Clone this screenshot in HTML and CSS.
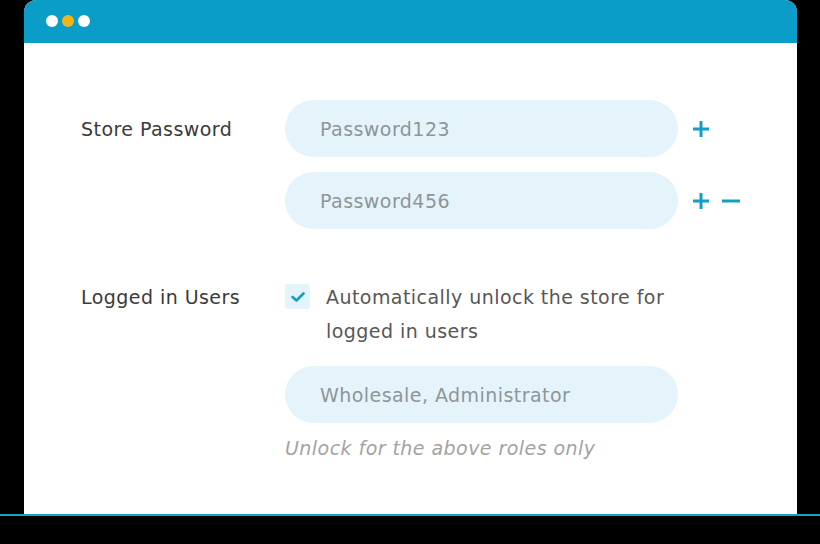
FILE: index.html
```html
<!DOCTYPE html>
<html lang="en">
<head>
  <meta charset="UTF-8" />
  <meta name="viewport" content="width=device-width, initial-scale=1.0"/>
  <title>Store Lock Settings</title>
  <link rel="stylesheet" href="styles.css">
</head>
<body>
  <div class="window">
    <div class="titlebar">
      <span class="dot"></span>
      <span class="dot dot-yellow"></span>
      <span class="dot"></span>
    </div>

    <div class="settings">
      <div class="label">Store Password</div>
      <div class="field-group">
        <div class="field-row">
          <input class="field" type="text" value="Password123" readonly />
          <div class="actions">
            <button class="icon-btn" title="Add">
              <svg width="18" height="18" viewBox="0 0 18 18"><path d="M9 1v16M1 9h16" /></svg>
            </button>
          </div>
        </div>
        <div class="field-row">
          <input class="field" type="text" value="Password456" readonly />
          <div class="actions">
            <button class="icon-btn" title="Add">
              <svg width="18" height="18" viewBox="0 0 18 18"><path d="M9 1v16M1 9h16" /></svg>
            </button>
            <button class="icon-btn" title="Remove">
              <svg width="18" height="18" viewBox="0 0 18 18"><path d="M0 9h18" /></svg>
            </button>
          </div>
        </div>
      </div>

      <div class="label label-users">Logged in Users</div>
      <div class="field-group users">
        <label class="check">
          <span class="check-box">
            <svg width="14" height="10" viewBox="0 0 14 10"><path d="M1.5 5l4 3.5L12.5 1.5" /></svg>
          </span>
          <span class="check-text">Automatically unlock the store for logged in users</span>
        </label>
        <input class="field" type="text" value="Wholesale, Administrator" readonly />
        <div class="hint">Unlock for the above roles only</div>
      </div>
    </div>
  </div>
  <div class="base"></div>
</body>
</html>
```

FILE: styles.css
```css
body {
  margin: 0;
  padding: 0;
  background-color: #000;
  font-family: 'DejaVu Sans', 'Noto Sans', Arial, sans-serif;
  color: #3d3d3d;
  letter-spacing: 0.45px;
}

.window {
  margin: 0 23px 0 24px;
  height: 514px;
  background-color: #fff;
  border-radius: 12px 12px 0 0;
  overflow: hidden;
}

.titlebar {
  height: 43px;
  background-color: #0a9dc7;
  display: flex;
  align-items: center;
  gap: 4px;
  padding: 0 0 2px 22px;
  box-sizing: border-box;
}

.dot {
  width: 12px;
  height: 12px;
  border-radius: 50%;
  background-color: #fff;
}

.dot-yellow {
  background-color: #f2b418;
}

.settings {
  display: grid;
  grid-template-columns: 204px 1fr;
  padding: 57px 0 0 57px;
}

.label {
  font-size: 19px;
  height: 57px;
  line-height: 59px;
  color: #3a3a3a;
}

.label-users {
  margin-top: 51px;
  height: 34px;
  line-height: 34px;
}

.field-group {
  display: flex;
  flex-direction: column;
  gap: 15px;
}

.field-row {
  display: flex;
  align-items: center;
}

.field {
  width: 393px;
  height: 57px;
  box-sizing: border-box;
  border: none;
  border-radius: 29px;
  background-color: #e5f4fa;
  padding: 0 0 0 35px;
  font-family: inherit;
  font-size: 19px;
  letter-spacing: inherit;
  color: #8d9699;
  outline: none;
}

.actions {
  display: flex;
  gap: 12px;
  margin-left: 14px;
}

.icon-btn {
  background: none;
  border: none;
  padding: 0;
  width: 18px;
  height: 18px;
  cursor: pointer;
}

.icon-btn svg path {
  stroke: #129fc6;
  stroke-width: 3;
  fill: none;
}

.users {
  margin-top: 51px;
  gap: 0;
}

.check {
  display: flex;
  align-items: flex-start;
  gap: 16px;
  width: 400px;
}

.check-box {
  flex: none;
  width: 25px;
  height: 25px;
  margin-top: 4px;
  border-radius: 3px;
  background-color: #e5f4fa;
  display: flex;
  align-items: center;
  justify-content: center;
}

.check-box path {
  stroke: #129fc6;
  stroke-width: 2.6;
  fill: none;
  stroke-linecap: round;
  stroke-linejoin: round;
}

.check-text {
  font-size: 19px;
  line-height: 34px;
  color: #575757;
}

.users .field {
  margin-top: 18px;
}

.hint {
  margin-top: 10px;
  font-size: 19px;
  font-style: italic;
  color: #a3a3a3;
  line-height: 30px;
}

.base {
  height: 2px;
  background-color: #1aa0c4;
}
```
